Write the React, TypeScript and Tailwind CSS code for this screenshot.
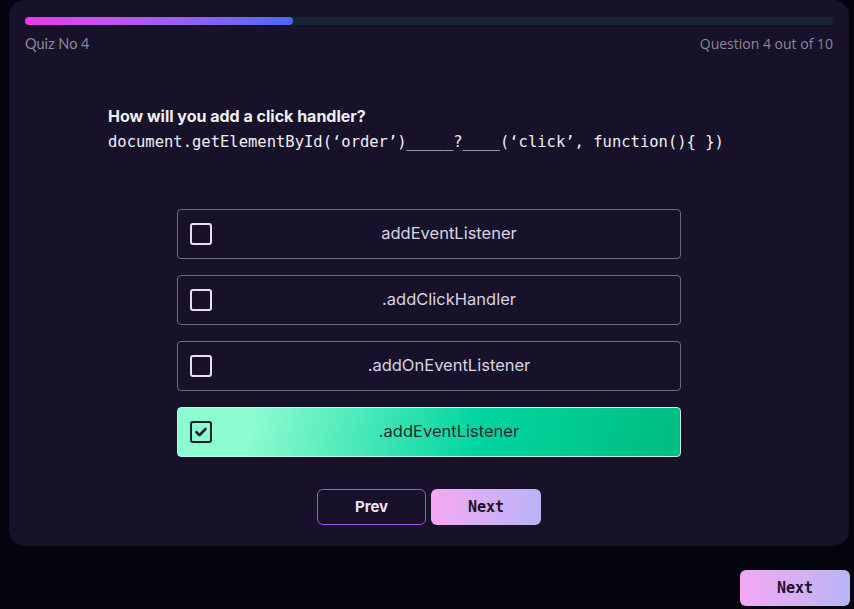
import React, { useState } from "react";

const options = ["addEventListener", ".addClickHandler", ".addOnEventListener", ".addEventListener"];

function CheckBox({ checked }: { checked: boolean }) {
  if (checked) {
    return (
      <div className="flex h-[22px] w-[22px] items-center justify-center rounded-[3px] border-[2.5px] border-[#15202b]">
        <svg width="14" height="14" viewBox="0 0 14 14" fill="none">
          <path d="M2.5 7.2 L5.6 10.2 L11.5 4" stroke="#15202b" strokeWidth="2.6" strokeLinecap="round" strokeLinejoin="round" />
        </svg>
      </div>
    );
  }
  return <div className="h-[22px] w-[22px] rounded-[3px] border-2 border-[#eadcf5]" />;
}

export default function App() {
  const [selected, setSelected] = useState(3);

  return (
    <div className="min-h-[609px] w-full bg-[#04040f] font-['Inter',sans-serif]">
      <div className="ml-[9px] w-[840px] rounded-b-2xl rounded-t-2xl bg-[#171229] px-4 pb-[21px] pt-[17px]">
        <div className="h-2 w-full rounded-full bg-[#172433]">
          <div className="h-2 w-[268px] rounded-full bg-gradient-to-r from-[#ec38e6] to-[#4768f6]" />
        </div>
        <div className="mt-[8px] flex justify-between text-[#8b8799]">
          <span className="font-['Lato',sans-serif] text-[14.5px]">Quiz No 4</span>
          <span className="font-['Open_Sans',sans-serif] text-[14px]">Question 4 out of 10</span>
        </div>

        <div className="mt-[51px] pl-[83px]">
          <h2 className="text-[16px] font-bold leading-5 text-[#f1eef6]">How will you add a click handler?</h2>
          <p className="mt-[6px] font-['DejaVu_Sans_Mono',monospace] text-[15.5px] leading-5 text-[#f1eef6]">
            document.getElementById(‘order’)_____?____(‘click’, function(){"{"} {"}"})
          </p>
        </div>

        <div className="mx-auto mt-[57px] flex w-[504px] flex-col gap-4">
          {options.map((opt, i) => {
            const on = i === selected;
            return (
              <button
                key={i}
                onClick={() => setSelected(i)}
                className={
                  on
                    ? "flex h-[50px] items-center rounded-[4px] border border-[#b8f5dd] bg-[linear-gradient(100deg,#8cfbd0_15%,#00d59f_60%,#00bd80_100%)] px-3 text-[#1b2a2e]"
                    : "flex h-[50px] items-center rounded-[4px] border border-[#6e6880] px-3 text-[#d8d3e2]"
                }
              >
                <CheckBox checked={on} />
                <span className="flex-1 pl-[18px] text-center text-[16.5px]">{opt}</span>
              </button>
            );
          })}
        </div>

        <div className="mt-8 flex justify-center gap-[5px]">
          <button className="h-9 w-[109px] rounded-md border border-[#9b55e8] text-[15px] font-bold text-[#ece4f4]">Prev</button>
          <button className="h-9 w-[110px] rounded-md bg-gradient-to-r from-[#f3a9f2] to-[#b9b3f7] font-['DejaVu_Sans_Mono',monospace] text-[15px] font-bold text-[#1a1428]">
            Next
          </button>
        </div>
      </div>

      <div className="mr-[4px] mt-6 flex justify-end">
        <button className="h-9 w-[110px] rounded-md bg-gradient-to-r from-[#f3a9f2] to-[#b9b3f7] font-['DejaVu_Sans_Mono',monospace] text-[15px] font-bold text-[#1a1428]">
          Next
        </button>
      </div>
    </div>
  );
}
